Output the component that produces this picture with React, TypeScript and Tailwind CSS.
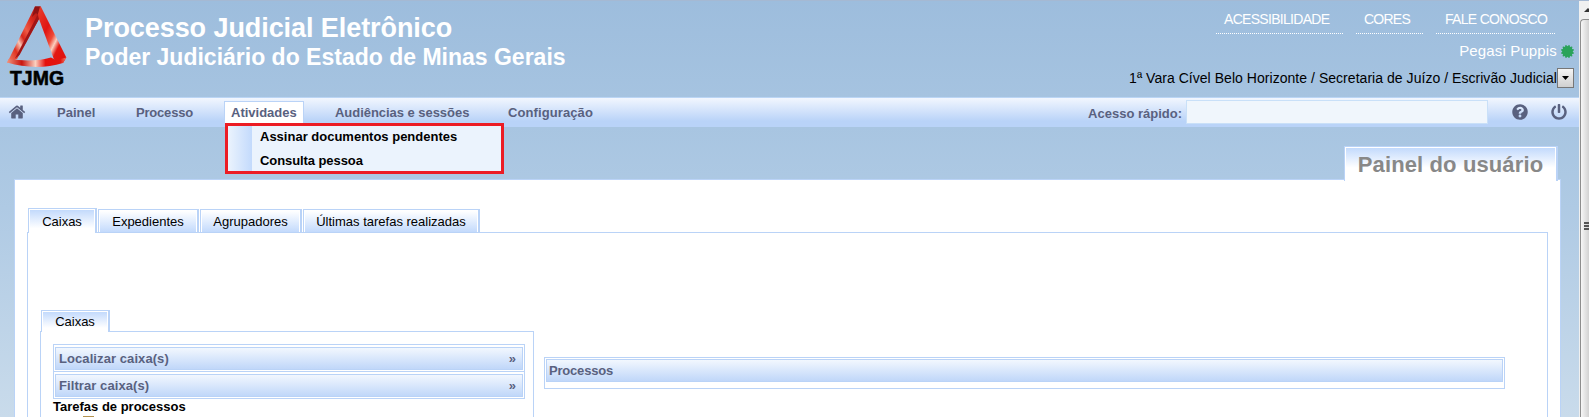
import React from 'react';
import { FaPowerOff, FaQuestionCircle, FaCertificate } from 'react-icons/fa';

const TjmgLogo: React.FC = () => (
  <svg width="68" height="84" viewBox="0 0 68 84">
    <defs>
      <linearGradient id="left" x1="1" y1="0" x2="0" y2="1">
        <stop offset="0" stopColor="#9c1414" />
        <stop offset="0.25" stopColor="#d8281d" />
        <stop offset="0.42" stopColor="#ef5a45" />
        <stop offset="0.54" stopColor="#d6261b" />
        <stop offset="0.64" stopColor="#f8c4b3" />
        <stop offset="0.76" stopColor="#e0301f" />
        <stop offset="1" stopColor="#f08a72" />
      </linearGradient>
      <linearGradient id="right" x1="0" y1="0" x2="1" y2="1">
        <stop offset="0" stopColor="#e8402e" />
        <stop offset="0.35" stopColor="#e01512" />
        <stop offset="0.52" stopColor="#ef4a38" />
        <stop offset="0.62" stopColor="#fbd0c0" />
        <stop offset="0.72" stopColor="#e21712" />
        <stop offset="1" stopColor="#e0100c" />
      </linearGradient>
      <linearGradient id="base" x1="0" y1="0" x2="1" y2="0">
        <stop offset="0" stopColor="#f2937c" />
        <stop offset="0.25" stopColor="#c9150f" />
        <stop offset="0.48" stopColor="#fbd0c0" />
        <stop offset="0.65" stopColor="#e5100c" />
        <stop offset="0.9" stopColor="#e2160f" />
        <stop offset="1" stopColor="#f07d68" />
      </linearGradient>
    </defs>
    <path d="M29 1.5 L34.500 1.5 L33 14 L11 54 L1 58 Z" fill="url(#left)" />
    <path d="M31.500 10 L33 14 L13.500 50 L9 53.500 Z" fill="#a01516" />
    <path d="M29 1.500 L34.500 1.500 L32.500 10 L30 8 L26 12 Z" fill="#8f1213" />
    <path d="M34 1.500 L34.800 1.500 L60.300 52.500 L57 58 L48 54.500 L33 14 L32 9 Z" fill="url(#right)" />
    <path d="M1 57.500 L2.500 54 Q28 57.500 45 52.500 L50 55 L60.300 52.500 L57 58 Q30 66 1 57.500 Z" fill="url(#base)" />
    <text x="4" y="79.5" textLength="54" lengthAdjust="spacingAndGlyphs" fontFamily="Liberation Sans" fontWeight="bold" fontSize="20" stroke="#000" strokeWidth="0.6">TJMG</text>
  </svg>
);

interface BoxProps {
  title: string;
  className: string;
}

const ToggleBox: React.FC<BoxProps> = ({ title, className }) => (
  <div className={`w-[472px] border border-[#bad3f7] px-px ${className}`}>
    <div className="flex h-[23px] items-center justify-between border border-[#bad3f7] bg-linear-to-b from-[#f2f7fe] to-[#c0d7f9] pr-[6px] pl-[3px] font-bold text-[#59617f]">
      <span className="tracking-[0.08px]">{title}</span>
      <span>»</span>
    </div>
  </div>
);

const tabs = [
  { label: 'Expedientes', width: 'w-[101px]' },
  { label: 'Agrupadores', width: 'w-[102px]' },
  { label: 'Últimas tarefas realizadas', width: 'w-[177px]' },
];

// The active tab hangs one pixel over the panel so that its bottom edge stays open
const ActiveTab: React.FC<{ label: string; className: string }> = ({ label, className }) => (
  <div className={`relative mb-[-1px] border border-b-0 border-[#bad3f7] border-r-2 bg-white p-px pb-0 ${className}`}>
    <div className="flex h-full items-center justify-center bg-linear-to-b from-[#c3dafc] to-white to-80%">{label}</div>
  </div>
);

const Header: React.FC = () => (
  <header className="flex h-[97px] justify-between border-t border-[#a5b9d3] pr-[5px] pl-[6px]">
    <div className="flex">
      <div className="mt-[4px] w-[79px]">
        <TjmgLogo />
      </div>
      <div className="pt-[10px] font-bold whitespace-nowrap text-white">
        <h1 className="text-[27px] leading-[34px] tracking-[-0.07px]">Processo Judicial Eletrônico</h1>
        <h2 className="text-[23px] leading-[24px]">Poder Judiciário do Estado de Minas Gerais</h2>
      </div>
    </div>
    <div className="flex flex-col items-end whitespace-nowrap">
      <nav className="mt-[7px] mr-[19px] flex h-[26px] gap-[13px] text-sm leading-[22px] text-white">
        <a className="w-[127px] border-b border-dotted border-white pl-[8px] tracking-[-0.7px]">ACESSIBILIDADE</a>
        <a className="w-[67px] border-b border-dotted border-white pl-[8px] tracking-[-0.75px]">CORES</a>
        <a className="w-[119px] border-b border-dotted border-white pl-[9px] tracking-[-0.7px]">FALE CONOSCO</a>
      </nav>
      <div className="mt-[6px] flex h-[22px] items-center gap-1 text-[15px] text-white">
        <span className="tracking-[0.15px]">Pegasi Puppis</span>
        <FaCertificate className="mt-px size-[13px] text-[#2aa35a]" />
      </div>
      <div className="mt-[6px] flex h-5 items-center text-sm">
        <span className="tracking-[0.04px]">1ª Vara Cível Belo Horizonte / Secretaria de Juízo / Escrivão Judicial</span>
        <span className="flex h-5 w-[17px] items-center justify-center border border-[#777] bg-linear-to-b from-[#f5f5f5] to-[#d0d0d0]">
          <svg width="7" height="4" viewBox="0 0 7 4"><path d="M0 0h7L3.5 4z" /></svg>
        </span>
      </div>
    </div>
  </header>
);

const HomeIcon: React.FC = () => (
  <svg className="mt-[5px] ml-2 size-[18px]" viewBox="0 0 1792 1792" fill="currentColor">
    <path d="M1472 992v480q0 26-19 45t-45 19h-384v-384h-256v384h-384q-26 0-45-19t-19-45v-480q0-1 .5-3t.5-3l575-474 575 474q1 2 1 6zm223-69l-62 74q-8 9-21 11h-3q-13 0-21-7l-692-577-692 577q-12 8-24 7-13-2-21-11l-62-74q-8-10-7-23.500t11-21.500l719-599q32-26 76-26t76 26l244 204v-195q0-14 9-23t23-9h192q14 0 23 9t9 23v408l219 182q10 8 11 21.500t-7 23.500z" />
  </svg>
);

const MenuBar: React.FC = () => (
  <div className="relative flex h-[30px] items-center justify-between border-t border-[#bad5f5] bg-linear-to-b from-[#f2f6fe] to-[#b9d3f8] to-80% font-bold whitespace-nowrap text-[#59617f]">
    <nav className="flex h-full items-start leading-[30px]">
      <HomeIcon />
      <span className="ml-[31px] w-[79px]">Painel</span>
      <span className="w-[88px] tracking-[-0.2px]">Processo</span>
      <span className="mt-[3px] h-[25px] w-20 border border-b-0 border-[#bad3f7] bg-white pl-[6px] leading-[22px]">Atividades</span>
      <span className="ml-[31px] w-[173px] tracking-[-0.04px]">Audiências e sessões</span>
      <span className="tracking-[0.1px]">Configuração</span>
    </nav>
    <div className="flex h-full items-start">
      <span className="mt-2 mr-1">Acesso rápido:</span>
      <input className="mt-[2px] h-6 w-[302px] border border-[#c9e0f8] bg-[#f0f6fc]" />
      <FaQuestionCircle className="mt-[6px] ml-6 size-4" />
      <FaPowerOff className="mt-[6px] mr-3 ml-[23px] size-4" />
    </div>
    <div className="absolute top-[25px] left-[225px] h-[51px] w-[279px] border-3 border-[#ec1c24] bg-[#ebf3fd] text-black">
      <div className="flex h-full">
        <div className="w-6 bg-linear-to-r from-[#ebf3fd] to-[#c3dafc]" />
        <div className="pl-2 leading-6">
          <div className="mt-[-1px]">Assinar documentos pendentes</div>
          <div className="tracking-[-0.08px]">Consulta pessoa</div>
        </div>
      </div>
    </div>
  </div>
);

const Scrollbar: React.FC = () => (
  <div className="flex w-[10px] flex-col border-t border-[#a5b9d3] bg-[#f0f0f0]">
    <div className="h-[18px] overflow-hidden pt-[7px] pl-[5px]">
      <svg width="8" height="4" viewBox="0 0 8 4"><path d="M0 4L4 0L8 4z" fill="#333" /></svg>
    </div>
    <div className="ml-px flex-1 rounded-tl-sm border-t border-l border-[#8e8e8e] bg-linear-to-r from-[#f7f7f7] to-[#d2d2d2] pt-[202px] pl-[3px]">
      <div className="h-[2px] bg-[#555]" />
      <div className="mt-px h-[2px] bg-[#555]" />
      <div className="mt-px h-[2px] bg-[#555]" />
    </div>
  </div>
);

export default function App() {
  return (
    <div className="flex h-[417px] w-[1589px] overflow-hidden bg-white font-['Liberation_Sans',Arial,sans-serif] text-[13px] leading-4 text-black">
      <div className="flex w-[1579px] flex-col bg-linear-to-b from-[#9dbddd] via-[#afcae4] to-[#c9dbeb]">
        <Header />
        <MenuBar />
        <div className="relative mt-[19px] mr-[21px] mb-[-1px] ml-auto h-[35px] w-[214px] shrink-0 border border-b-0 border-[#bad3f7] border-r-2 bg-white p-px pb-0">
          <div className="flex h-full items-center justify-center bg-linear-to-b from-[#c3dafc] to-white to-60% text-[22px] font-bold tracking-[0.12px] whitespace-nowrap text-[#888]">Painel do usuário</div>
        </div>
        <main className="mt-[-1px] mr-[18px] ml-[14px] flex-1 border border-b-0 border-[#bad3f7] bg-white pt-7 pr-3 pl-3">
          <div className="flex h-6 items-end gap-px pl-px whitespace-nowrap">
            <ActiveTab label="Caixas" className="h-[25px] w-[69px]" />
            {tabs.map((tab) => (
              <div key={tab.label} className={`h-[23px] border border-r-2 border-b-0 border-[#bad3f7] bg-white p-px pb-0 ${tab.width}`}>
                <div className="flex h-full items-center justify-center bg-linear-to-b from-white to-[#c3dafc] pt-px">{tab.label}</div>
              </div>
            ))}
          </div>
          <div className="h-[185px] border border-b-0 border-[#bad3f7] pt-[77px] pl-3">
            <ActiveTab label="Caixas" className="ml-px h-[22px] w-[69px]" />
            <div className="flex items-start">
              <div className="h-[86px] w-[494px] border border-b-0 border-[#bad3f7] pt-3 pl-3">
                <ToggleBox title="Localizar caixa(s)" className="h-[28px] pt-[2px]" />
                <ToggleBox title="Filtrar caixa(s)" className="h-[27px] border-t-0 pt-[2px]" />
                <div className="font-bold">Tarefas de processos</div>
                <div className="mt-px ml-[30px] h-px w-[11px] bg-[#b3924f]" />
              </div>
              <div className="mt-[26px] ml-[10px] h-8 w-[961px] border border-[#bad3f7] p-px">
                <div className="flex h-[23px] items-center border border-[#bad3f7] bg-linear-to-b from-[#f2f7fe] to-[#c0d7f9] pl-[2px] font-bold tracking-[-0.2px] text-[#59617f]">Processos</div>
              </div>
            </div>
          </div>
        </main>
      </div>
      <Scrollbar />
    </div>
  );
}
